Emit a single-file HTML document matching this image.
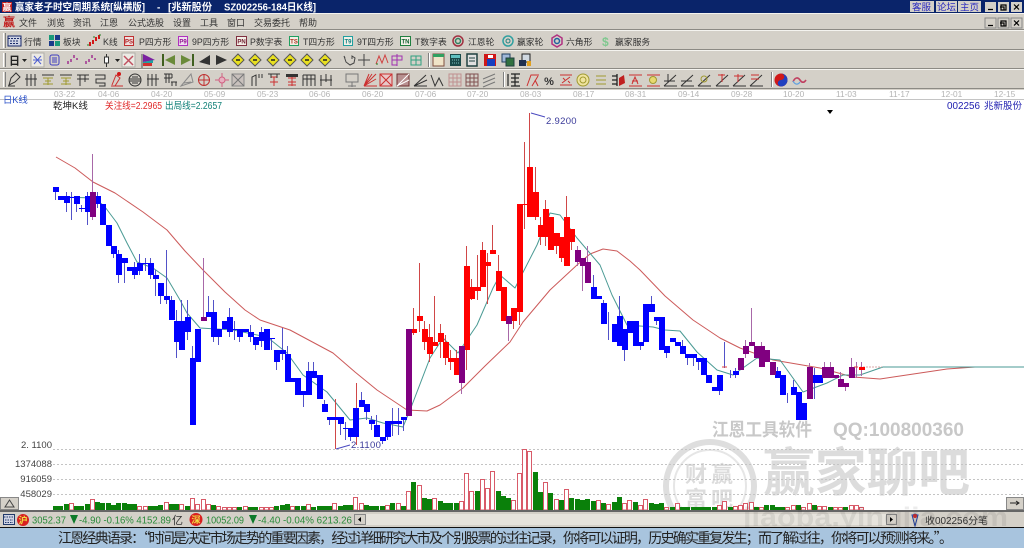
<!DOCTYPE html>
<html><head><meta charset="utf-8"><title>赢家老子时空周期系统</title>
<style>
html,body{margin:0;padding:0;width:1024px;height:548px;overflow:hidden;background:#fff}
svg{display:block}
text{font-family:"Liberation Sans","Noto Sans CJK SC",sans-serif}
</style></head><body>
<svg xmlns="http://www.w3.org/2000/svg" width="1024" height="548" viewBox="0 0 1024 548">
<!-- backgrounds -->
<rect width="1024" height="548" fill="#fff"/>
<rect y="0" width="1024" height="13" fill="#0a246a"/>
<rect y="13" width="1024" height="77" fill="#d4d0c8"/>
<g stroke-width="1" shape-rendering="crispEdges">
<path d="M0 13.500H1024M0 30.500H1024M0 50.500H1024M0 69.500H1024" stroke="#f4f3ef"/>
<path d="M0 29.500H1024M0 49.500H1024M0 68.500H1024M0 88.500H1024" stroke="#8c8a84"/>
<path d="M3.500 33V48M3.500 53V67M3.500 72V87" stroke="#fff"/>
<path d="M5.500 33V48M5.500 53V67M5.500 72V87" stroke="#808080"/>
<path d="M428.500 53V67M503.500 72V87M771.500 72V87" stroke="#808080"/>
<path d="M429.500 53V67M504.500 72V87M772.500 72V87" stroke="#fff"/>
<path d="M0 99.500H1024" stroke="#c4c4c4"/>
</g>
<!-- title -->
<rect x="2" y="2" width="10" height="10" fill="#c02020"/>
<text x="7" y="10.500" font-size="9" text-anchor="middle" fill="#fff" font-weight="bold">赢</text>
<g fill="#fff" font-weight="bold" font-size="10">
<text x="15" y="10.500" textLength="130" lengthAdjust="spacingAndGlyphs">赢家老子时空周期系统[纵横版]</text>
<text x="157" y="10.500">-</text>
<text x="168" y="10.500" textLength="44" lengthAdjust="spacingAndGlyphs">[兆新股份</text>
<text x="224" y="10.500" textLength="92" lengthAdjust="spacingAndGlyphs">SZ002256-184日K线]</text>
</g>
<!-- title right buttons -->
<g shape-rendering="crispEdges">
<rect x="910" y="1" width="24" height="11" fill="#d4d0c8"/><rect x="936" y="1" width="21" height="11" fill="#d4d0c8"/><rect x="958" y="1" width="23" height="11" fill="#d4d0c8"/>
<rect x="985" y="2" width="11" height="10" fill="#d4d0c8"/><rect x="998" y="2" width="11" height="10" fill="#d4d0c8"/><rect x="1011" y="2" width="11" height="10" fill="#d4d0c8"/>
<rect x="985" y="18" width="11" height="10" fill="#d4d0c8" stroke="#888"/><rect x="998" y="18" width="11" height="10" fill="#d4d0c8" stroke="#888"/><rect x="1011" y="18" width="11" height="10" fill="#d4d0c8" stroke="#888"/>
</g>
<g font-size="9.500" fill="#2a2ac0">
<text x="912" y="10.500">客服</text><text x="937" y="10.500">论坛</text><text x="960" y="10.500">主页</text></g>
<path d="M988 9.500h5M1001 5h5v5h-5zM1000 7h4v3M1014 4.500l5 5M1019 4.500l-5 5M988 25.500h5M1001 21h5v5h-5zM1000 23h4v3M1014 20.500l5 5M1019 20.500l-5 5" stroke="#000" fill="none" stroke-width="1.200"/>
<!-- menu -->
<text x="3" y="26" font-size="12" fill="#c01818" font-weight="bold">赢</text>
<g font-size="9" fill="#333">
<text x="19" y="26">文件</text><text x="47" y="26">浏览</text><text x="73" y="26">资讯</text><text x="100" y="26">江恩</text><text x="128" y="26">公式选股</text><text x="173" y="26">设置</text><text x="200" y="26">工具</text><text x="227" y="26">窗口</text><text x="254" y="26">交易委托</text><text x="299" y="26">帮助</text>
</g>
<!-- toolbar 1 -->
<g font-size="8.800" fill="#333">
<text x="24" y="45">行情</text><text x="63" y="45">板块</text><text x="103" y="45">K线</text><text x="139" y="45">P四方形</text><text x="192" y="45">9P四方形</text><text x="250" y="45">P数字表</text><text x="303" y="45">T四方形</text><text x="357" y="45">9T四方形</text><text x="415" y="45">T数字表</text><text x="468" y="45">江恩轮</text><text x="517" y="45">赢家轮</text><text x="566" y="45">六角形</text><text x="615" y="45">赢家服务</text>
</g>
<rect x="8" y="36" width="13" height="10" fill="#cfd4e4" stroke="#1a2a6a"/><path d="M8 38.500h13M10 41h9M10 43.500h9" stroke="#1a2a6a" fill="none" stroke-dasharray="2 1"/>
<rect x="49" y="35" width="5" height="5" fill="#1a9a7a"/><rect x="55" y="35" width="5" height="5" fill="#1a3a8a"/><rect x="49" y="41" width="5" height="5" fill="#1a3a8a"/><rect x="55" y="41" width="5" height="5" fill="#1a9a7a"/>
<path d="M90 42v4M93 40v4M96 37v4M99 35v4" stroke="#d01818" stroke-width="2"/><path d="M88 46v-2M94 38v-2M100 36v-2" stroke="#208020" stroke-width="1"/>
<g fill="#f4f0e8" stroke-width="1" shape-rendering="crispEdges">
<rect x="124.500" y="36.500" width="9" height="9" stroke="#c03030" fill="#f0e0e0"/><rect x="178.500" y="36.500" width="9" height="9" stroke="#b030c0" fill="#f0e0f0"/><rect x="236.500" y="36.500" width="10" height="9" stroke="#803040"/><rect x="289.500" y="36.500" width="9" height="9" stroke="#20a060"/><rect x="343.500" y="36.500" width="9" height="9" stroke="#20a0a0"/><rect x="400.500" y="36.500" width="10" height="9" stroke="#208040"/>
</g>
<g font-size="6" font-weight="bold" text-anchor="middle">
<text x="129" y="43.500" fill="#b02020">PS</text><text x="183" y="43.500" fill="#901090">P9</text><text x="241.500" y="43.500" fill="#702030">PN</text><text x="294" y="43.500" fill="#b03020">TS</text><text x="348" y="43.500" fill="#108080">T9</text><text x="405.500" y="43.500" fill="#106030">TN</text>
</g>
<g fill="none">
<circle cx="458" cy="41" r="5" stroke="#a03040" stroke-width="1.500"/><circle cx="458" cy="41" r="2.500" stroke="#308060" stroke-width="1.500"/>
<circle cx="508" cy="41" r="5" stroke="#30a0a0" stroke-width="1.500"/><circle cx="508" cy="41" r="2" stroke="#208080"/>
<path d="M557 35l5 3v6l-5 3-5-3v-6z" stroke="#b03080" stroke-width="1.500"/><circle cx="557" cy="41" r="2.500" stroke="#2060a0" stroke-width="1.500"/>
</g>
<text x="602" y="46" font-size="12" font-weight="bold" fill="#80c890">$</text>
<!-- toolbar 2 -->
<text x="9" y="64.500" font-size="11" font-weight="bold" fill="#222">日</text>
<path d="M22 59h5l-2.500 3zM115 59h5l-2.500 3z" fill="#222"/>
<rect x="31" y="53" width="13" height="14" fill="#eceae4" stroke="#b0aea8"/>
<rect x="122" y="53" width="13" height="14" fill="#eceae4" stroke="#b0aea8"/>
<path d="M34 56l7 8M41 56l-7 8M33 60h9" stroke="#5060d0" fill="none"/>
<rect x="50" y="55" width="9" height="10" rx="2" fill="none" stroke="#4040c0"/><path d="M52 58h5M52 60h5M52 62h5" stroke="#4040c0"/>
<path d="M68 64v-3M71 62v-3M74 58v-3M77 60v-2M86 64v-3M89 62v-3M92 58v-3M95 60v-2" stroke="#a03090" stroke-width="1.500"/>
<path d="M106.500 54v13" stroke="#333"/><rect x="104.500" y="57" width="4" height="6" fill="#fff" stroke="#333"/>
<path d="M124 56l9 9M133 56l-9 9" stroke="#c05060" stroke-width="1.500"/>
<path d="M142 54v14" stroke="#555"/><path d="M143 54l12 6-12 2z" fill="#7a20a0"/><path d="M143 62l10-2v3h-10z" fill="#20a0a0"/><path d="M143 63h9v3h-9z" fill="#d03030"/>
<path d="M163 54v12" stroke="#406020" stroke-width="2"/><path d="M175 55v10l-10-5z" fill="#6a8a3a"/>
<path d="M193 54v12" stroke="#406020" stroke-width="2"/><path d="M181 55v10l10-5z" fill="#6a8a3a"/>
<path d="M210 55v10l-11-3z" fill="#333"/><path d="M216 55v10l11-5z" fill="#333"/>
<g fill="#e8e020" stroke="#555"><path d="M238 54l6 6-6 6-6-6zM255 54l6 6-6 6-6-6zM273 54l6 6-6 6-6-6zM290 54l6 6-6 6-6-6zM307 54l6 6-6 6-6-6zM325 54l6 6-6 6-6-6z"/></g>
<path d="M236 60h4M253 60h4M271 60h4M288 60h4M305 60h4M323 60h4" stroke="#222" stroke-width="1.500"/>
<path d="M344 56l2 6 4 3 4-2 1-5-3-2v3M345 58l-1-2" stroke="#444" fill="none"/>
<path d="M364 54v12M358 60h12" stroke="#444"/>
<path d="M376 64l3-8 3 7 3-8 3 8" stroke="#d04040" fill="none"/><path d="M376 64h2" stroke="#208020"/>
<path d="M392 56h10v4h-10zM397 54v12M392 60v5h5" stroke="#a030b0" fill="none"/>
<path d="M411 56h10v9h-10zM416 56v9M411 60h10" stroke="#30a080" fill="none"/>
<rect x="433" y="54" width="11" height="12" fill="#f0e4c8" stroke="#805040"/><rect x="433" y="54" width="11" height="3" fill="#30a060"/>
<rect x="450" y="54" width="11" height="12" fill="#1a4a4a"/><rect x="451" y="55" width="9" height="3" fill="#60c0c0"/><path d="M452 60h7M452 63h7" stroke="#80c0c0" stroke-dasharray="1 1"/>
<rect x="467" y="54" width="10" height="12" fill="#e0e0e0" stroke="#204040" stroke-width="1.500"/><path d="M469 58h6M469 61h6" stroke="#204040"/>
<rect x="484" y="54" width="12" height="12" fill="#d01818"/><rect x="487" y="59" width="8" height="7" fill="#1840c0"/><rect x="488" y="55" width="5" height="3" fill="#fff"/>
<rect x="502" y="54" width="8" height="8" fill="#a0b8d8" stroke="#204060"/><rect x="506" y="58" width="8" height="8" fill="#307040" stroke="#204040"/>
<rect x="522" y="54" width="8" height="8" fill="#d0d8e0" stroke="#202020"/><rect x="519" y="60" width="7" height="6" fill="#203050"/><rect x="527" y="61" width="4" height="5" fill="#e0a020"/>
<!-- toolbar 3 -->
<g fill="none" stroke="#333">
<path d="M9 85l2-7 5-5 4 4-5 5zM8 86h7"/>
<g transform="translate(31 80)"><path d="M-4-6V6M0-6V6M4-6V6M-6-1H6"/></g>
<g transform="translate(83 80)"><path d="M-6-5H6M-3-5V6M2-5V2M-6-1H6"/></g>
<g transform="translate(100 80)"><path d="M-5-5H5V-1H-4V3H5V6H-1"/></g>
<g transform="translate(135 80)"><circle r="6"/><path d="M-6-1H6M-6 1H6M-3-3H3M-3 3H3"/></g>
<g transform="translate(153 80)"><path d="M-5-6V6M-1-6V6M3-6V6M-6-1H6"/></g>
<g transform="translate(170 80)"><path d="M-6-6H2M-4-6V3M-1-6V3M2-6V-2M1 2H7M2 2V6M6 2V6M-6-2H2"/></g>
<g transform="translate(257 80)"><path d="M-5 6V-3L-1-5V6M2-6V-2M5-6V-2"/></g>
<g transform="translate(309 80)"><path d="M-6-5H6V6M-6-5V6M-6-1H6M-2-5V6M2-5V6"/></g>
<g transform="translate(326 80)"><path d="M-5-5V6M5-5V6M0-6V2M-6 0H6"/></g>
<g transform="translate(420 80)"><path d="M-6 6L6-5M-6 6L7 0M-6 6H7"/></g>
<g transform="translate(437 80)"><path d="M-6-5L-2 6L2-2L6 6"/></g>
<g transform="translate(514 80)"><path d="M-6-6V6M-3-6H6M-3-2H5M-3 2H5M-3 6H6M1-6V6" stroke="#222" stroke-width="1.200"/></g>
<g transform="translate(618 80)"><path d="M-1-6V6M-6-4H-1M-6 0H-1M-6 4H-1" stroke="#222" stroke-width="1.300"/></g>
<g transform="translate(670 80)"><path d="M-6 6L6-5M-6 6H7M-6 1H5M-2-6V2"/></g>
<g transform="translate(687 80)"><path d="M-6 6L6-5M-6 6H7M-6 1H5"/></g>
<g transform="translate(704 80)"><path d="M-6 6L6-5M-6 6H7"/></g>
<g transform="translate(722 80)"><path d="M-6 6L6-5M-6 6H7"/></g>
<g transform="translate(739 80)"><path d="M-6 6L6-5M-6 6H7"/></g>
<g transform="translate(756 80)"><path d="M-6 6L6-5M-6 6H7"/></g>
</g>
<g fill="none" stroke="#a09a30">
<g transform="translate(48 80)"><path d="M-5-2H5M-3 1H3M-5 4H5M0-2V5"/></g>
<g transform="translate(66 80)"><path d="M-5-2H5M-3 1H3M-5 4H5M0-2V5"/></g>
<g transform="translate(601 80)"><path d="M-5-4H5M-5 0H5M-5 4H5"/></g>
<g transform="translate(704 79)"><circle r="3"/></g>
</g>
<g stroke="#333" fill="none"><path d="M42-99"/><path d="M42 75h12M60 75h12"/></g>
<g fill="none" stroke="#cc3030">
<g transform="translate(117 80)"><path d="M-5 5L-1-5L3-2L-2 6M-6 6H6" /></g>
<g transform="translate(274 80)"><path d="M-3-3H3M0-3V6M-4 2H4"/></g>
<g transform="translate(292 80)"><path d="M-4-2H4M-4 2H4M-4 5H4M0-3V6"/></g>
<g transform="translate(370 80)"><path d="M-6 6L6-6M-6 6L6-1M-6 6L-1-6M-6 6L2-6M-6 6H7"/></g>
<g transform="translate(386 80)"><rect x="-6" y="-6" width="12" height="12" fill="#e8c8c8"/><path d="M-6-6L6 6M6-6L-6 6"/></g>
<g transform="translate(532 80)"><path d="M-5 6L-1-5H7M0 6L6-4M6 6L3 0"/></g>
<g transform="translate(566 80)"><path d="M-6-5H6M-6 5H6M-4 3L4-3M-3-2L-1 0M2 1L4 3"/></g>
<g transform="translate(635 80)"><path d="M-6-5H7M-6 6H7M-3 4L0-3L3 4M-3 1H3"/></g>
<g transform="translate(653 80)"><path d="M-6-5H7M-6 6H7"/></g>
<g transform="translate(722 80)"><path d="M-4-5H3M0-6V2"/></g>
<g transform="translate(739 80)"><path d="M-5-4H4M-1-6V2"/></g>
<g transform="translate(756 80)"><path d="M-5-5H3M-5-1H3"/></g>
</g>
<g transform="translate(292 80)"><path d="M-6-6H6V-3H-6z" fill="#333"/></g>
<g transform="translate(274 80)"><path d="M-6-6H6M-3-6V-2M3-6V-2" stroke="#333" fill="none"/></g>
<g transform="translate(117 79)"><circle cx="2" cy="-5" r="2" fill="#d01818"/></g>
<g transform="translate(653 80)"><circle cy="0" r="3.500" fill="#e8d870" stroke="#a09a30"/></g>
<g transform="translate(583 80)"><circle r="6" fill="#f0e4a0" stroke="#a09a30"/><circle r="3" fill="none" stroke="#a09a30"/></g>
<g transform="translate(618 80)"><path d="M1 6V-2L6-5L7 3z" fill="#c02020"/></g>
<text x="549" y="85" font-size="11" font-weight="bold" fill="#333" text-anchor="middle">%</text>
<g transform="translate(187 80)" fill="none" stroke="#8a8a8a"><path d="M-6 6L4-6L6 2zM-3 3L4 2"/></g>
<g transform="translate(204 80)" fill="none" stroke="#c03030"><circle r="5.500"/><path d="M-6 0H6M0-6V6"/></g>
<g transform="translate(222 80)" fill="none" stroke="#d06080"><path d="M-7 0H7M0-7V7"/><circle r="3" fill="#e8b0c0"/></g>
<g transform="translate(238 80)"><rect x="-6" y="-6" width="12" height="12" fill="#c8c0bc" stroke="#888"/><path d="M-6-6L6 6M6-6L-6 6" stroke="#777"/></g>
<g transform="translate(352 80)" fill="none" stroke="#777"><path d="M-6-6H6V2H-6zM0 2V7M-4 6H4"/></g>
<g transform="translate(403 80)"><rect x="-6" y="-6" width="12" height="12" fill="#b89090" stroke="#703030"/><path d="M-6 6L6-6M-6 6L6 0" stroke="#fff" fill="none"/></g>
<g transform="translate(455 80)" fill="none" stroke="#c09090"><path d="M-6-6H6V6H-6zM-2-6V6M2-6V6M-6-2H6M-6 2H6"/></g>
<g transform="translate(472 80)" fill="none" stroke="#805050"><path d="M-6-6H6V6H-6zM-2-6V6M2-6V6M-6-2H6M-6 2H6"/></g>
<g transform="translate(489 80)" fill="none" stroke="#777"><path d="M-6-1L6-6M-6 3L6-2M-6 7L6 2"/></g>
<circle cx="781" cy="80" r="6.500" fill="#d01818"/><path d="M781 73.500a3.200 3.200 0 0 1 0 6.500a3.200 3.200 0 0 0 0 6.500a6.500 6.500 0 0 0 0-13z" fill="#2040c0"/>
<path d="M793 82c2-5 5-5 7-2s4 3 6 0" fill="none" stroke="#c04060" stroke-width="1.600"/><path d="M793 81c2 4 5 4 7 1" fill="none" stroke="#60a0e0" stroke-width="1.200"/>
<!-- date axis -->
<g font-size="8.300" fill="#b4b4b4">
<text x="54" y="97">03-22</text><text x="98" y="97">04-06</text><text x="151" y="97">04-20</text><text x="204" y="97">05-09</text><text x="257" y="97">05-23</text><text x="309" y="97">06-06</text><text x="362" y="97">06-20</text><text x="415" y="97">07-06</text><text x="467" y="97">07-20</text><text x="520" y="97">08-03</text><text x="573" y="97">08-17</text><text x="625" y="97">08-31</text><text x="678" y="97">09-14</text><text x="731" y="97">09-28</text><text x="783" y="97">10-20</text><text x="836" y="97">11-03</text><text x="889" y="97">11-17</text><text x="941" y="97">12-01</text><text x="994" y="97">12-15</text>
</g>
<text x="3" y="103" font-size="9.300" fill="#2a50c8">日K线</text>
<text x="53" y="109" font-size="9.500" fill="#222">乾坤K线</text>
<text x="105" y="109" font-size="9.800" fill="#e02828" textLength="57" lengthAdjust="spacingAndGlyphs">关注线=2.2965</text>
<text x="165" y="109" font-size="9.800" fill="#108078" textLength="57" lengthAdjust="spacingAndGlyphs">出局线=2.2657</text>
<text x="947" y="109" font-size="10" fill="#2020b0" textLength="33" lengthAdjust="spacingAndGlyphs">002256</text>
<text x="984" y="109" font-size="9.500" fill="#2020b0">兆新股份</text>
<path d="M827 110h6l-3 4z" fill="#000"/>
<!-- watermark -->
<g fill="#d6d6d6">
<text x="712" y="436" font-size="18" font-weight="bold" fill="#c8c8c8" textLength="100" lengthAdjust="spacingAndGlyphs">江恩工具软件</text>
<text x="833" y="436" font-size="19" font-weight="bold" fill="#c8c8c8" textLength="131" lengthAdjust="spacingAndGlyphs">QQ:100800360</text>
<text x="763" y="491" font-size="52" font-weight="bold" fill="#dcdcdc" textLength="207" lengthAdjust="spacingAndGlyphs">赢家聊吧</text>
</g>
<circle cx="710" cy="486" r="44" fill="none" stroke="#dedede" stroke-width="6"/>
<circle cx="710" cy="486" r="36" fill="none" stroke="#e6e6e6" stroke-width="2"/>
<g font-size="22" font-weight="bold" fill="#dcdcdc"><text x="685" y="482">财</text><text x="711" y="482">赢</text><text x="685" y="507">富</text><text x="711" y="507">吧</text></g>
<!-- grid -->
<path d="M53 449.500H1023M53 464.500H1023M53 479.500H1023M53 494.500H1023" stroke="#c4c4c4" stroke-dasharray="2 2" fill="none" shape-rendering="crispEdges"/>
<g font-size="9.500" fill="#444" text-anchor="end">
<text x="52" y="448">2. 1100</text><text x="52" y="467">1374088</text><text x="52" y="482">916059</text><text x="52" y="497">458029</text>
</g>
<!-- MA lines -->
<path fill="none" stroke="#cc5a5a" stroke-width="1" stroke-linejoin="round" d="M56 157L75 168L93 182L115 193L143 212L167 230L185 251L203 270L225 292L245 310L260 320L290 330L333 353L355 372L377 390L407 410L427 411L440 405L463 388L485 366L510 342L523 322L550 290L577 265L590 254L603 249L617 251L630 261L640 270L665 296L693 320L720 338L740 348L773 360L820 368L853 377L880 379L900 376L947 369L975 367"/>
<path fill="none" stroke="#4a9a94" stroke-width="1" stroke-linejoin="round" d="M60 197L95 198L105 207L117 223L127 243L137 262L153 268L167 278L180 300L187 313L200 328L233 330L267 337L287 353L303 375L327 392L350 420L367 418L383 423L403 427L412 405L430 358L443 338L458 353L477 325L493 288L500 275L515 288L537 245L550 213L560 215L577 238L600 265L612 295L627 325L653 327L665 330L680 331L697 352L717 370L733 375L757 358L780 360L803 392L827 383L843 375L860 375L883 367L1024 367"/>
<path d="M860 367H882" stroke="#d8a8a8" stroke-dasharray="2 1" fill="none"/>
<!-- wicks -->
<g fill="none" stroke-width="1" shape-rendering="crispEdges">
<path stroke="#5252c8" d="M55.500 187V200M66.500 192V212M71.500 192V220M76.500 196V212M81.500 205V212M87.500 192V225M97.500 192V208M113.500 246V258M118.500 250V283M124.500 258V283M134.500 262V279M139.500 254V275M145.500 258V271M150.500 258V279M155.500 270V296M160.500 283V304M166.500 250V304M171.500 296V320M176.500 310V358M181.500 300V350M187.500 300V340M192.500 346V360M208.500 296V317M213.500 300V342M218.500 329V345M229.500 308V337M234.500 321V340M239.500 329V342M250.500 325V342M255.500 337V350M261.500 327V347M271.500 338V350M276.500 350V370M282.500 328V360M287.500 346V354M303.500 391V407M308.500 362V371M313.500 362V371M324.500 400V412M329.500 417V425M340.500 417V435M345.500 422V440M350.500 428V441M361.500 392V400M366.500 404V420M371.500 416V430M376.500 415V425M382.500 437V444M387.500 421V440M392.500 408V436M398.500 408V435M403.500 417V431M593.500 275V287M603.500 300V304M608.500 312V340M619.500 296V316M624.500 340V361M640.500 342V350M651.500 296V304M656.500 317V325M666.500 346V358M682.500 340V346M687.500 354V365M693.500 354V366M698.500 358V370M703.500 358V372M719.500 375V395M724.500 342V368M730.500 370V378M735.500 368V378M777.500 367V371M787.500 393V403M793.500 380V387M814.500 368V399"/>
<path stroke="#d04848" d="M335.500 399V449M356.500 383V445M413.500 308V335M419.500 263V332M424.500 321V350M429.500 324V362M434.500 296V342M440.500 324V358M445.500 335V365M450.500 350V370M456.500 350V375M466.500 246V370M471.500 279V300M477.500 255V300M482.500 242V252M487.500 253V304M492.500 225V252M498.500 255V272M513.500 308V329M519.500 300V325M524.500 142V229M529.500 113V170M535.500 167V220M540.500 217V245M545.500 200V246M556.500 233V254M561.500 237V262M566.500 196V218M571.500 229V250"/>
<path stroke="#a868a8" d="M92.500 154V220M203.500 258V317M461.500 346V394M508.500 316V341M577.500 246V266M582.500 258V291M587.500 246V265M745.500 340V358M751.500 308V342M761.500 342V348M809.500 363V367M824.500 362V367M830.500 362V367M840.500 372V380M845.500 387V391M851.500 358V367M856.500 362V378M861.500 362V376"/>
</g>
<!-- candle bodies -->
<path fill="#0000ff" shape-rendering="crispEdges" d="M53 187h6v5h-6zM58 196h6v4h-6zM64 196h6v7h-6zM69 197h6v1h-6zM74 196h6v8h-6zM79 208h6v1h-6zM85 196h6v16h-6zM95 196h6v8h-6zM100 204h6v21h-6zM106 225h6v21h-6zM111 246h6v8h-6zM116 254h6v21h-6zM122 258h6v5h-6zM127 267h6v4h-6zM132 267h6v8h-6zM137 263h6v8h-6zM143 263h6v1h-6zM148 263h6v12h-6zM153 275h6v4h-6zM158 283h6v13h-6zM164 296h6v4h-6zM169 300h6v20h-6zM174 321h6v21h-6zM179 321h6v29h-6zM185 317h6v15h-6zM190 358h6v67h-6zM195 329h6v33h-6zM206 312h6v5h-6zM211 312h6v25h-6zM216 329h6v8h-6zM222 321h6v8h-6zM227 317h6v15h-6zM232 329h6v1h-6zM237 329h6v8h-6zM243 329h6v3h-6zM248 332h6v5h-6zM253 337h6v8h-6zM259 332h6v9h-6zM264 329h6v21h-6zM269 338h6v1h-6zM274 350h6v12h-6zM280 350h6v4h-6zM285 354h6v28h-6zM290 378h6v4h-6zM295 378h6v17h-6zM301 391h6v4h-6zM306 371h6v24h-6zM311 371h6v7h-6zM317 375h6v24h-6zM322 404h6v8h-6zM327 417h6v3h-6zM332 417h6v3h-6zM338 417h6v7h-6zM343 428h6v1h-6zM348 428h6v9h-6zM353 408h6v29h-6zM359 400h6v7h-6zM364 404h6v8h-6zM369 420h6v4h-6zM374 425h6v12h-6zM380 437h6v4h-6zM385 421h6v16h-6zM390 421h6v3h-6zM396 421h6v3h-6zM401 417h6v3h-6zM591 287h6v12h-6zM596 296h6v3h-6zM601 303h6v21h-6zM612 324h6v18h-6zM617 316h6v30h-6zM622 329h6v21h-6zM627 321h6v12h-6zM633 321h6v25h-6zM638 342h6v4h-6zM643 304h6v38h-6zM649 304h6v8h-6zM654 317h6v4h-6zM659 317h6v33h-6zM664 346h6v7h-6zM670 338h6v4h-6zM675 342h6v4h-6zM680 346h6v8h-6zM685 354h6v4h-6zM691 354h6v4h-6zM696 358h6v4h-6zM701 358h6v17h-6zM706 375h6v8h-6zM712 387h6v4h-6zM717 375h6v16h-6zM733 371h6v4h-6zM775 371h6v7h-6zM780 375h6v20h-6zM791 387h6v8h-6zM796 392h6v28h-6zM801 403h6v17h-6zM812 375h6v8h-6zM817 375h6v8h-6z"/>
<path fill="#ff0000" shape-rendering="crispEdges" d="M411 329h6v4h-6zM417 316h6v5h-6zM422 329h6v13h-6zM427 337h6v17h-6zM432 342h6v4h-6zM438 333h6v9h-6zM443 342h6v16h-6zM448 358h6v4h-6zM454 358h6v17h-6zM464 266h6v84h-6zM469 287h6v12h-6zM475 287h6v4h-6zM480 250h6v37h-6zM485 262h6v4h-6zM490 250h6v4h-6zM496 271h6v20h-6zM501 287h6v34h-6zM511 308h6v13h-6zM517 204h6v108h-6zM522 204h6v1h-6zM527 167h6v50h-6zM533 192h6v25h-6zM538 225h6v12h-6zM543 209h6v28h-6zM548 217h6v33h-6zM554 233h6v13h-6zM559 237h6v21h-6zM564 217h6v49h-6zM569 229h6v13h-6zM859 367h6v3h-6z"/>
<path fill="#800080" shape-rendering="crispEdges" d="M90 192h6v25h-6zM201 317h6v4h-6zM406 329h6v87h-6zM459 346h6v37h-6zM506 316h6v8h-6zM575 250h6v12h-6zM580 258h6v8h-6zM585 262h6v21h-6zM738 358h6v12h-6zM743 346h6v8h-6zM749 342h6v4h-6zM754 346h6v12h-6zM759 346h6v21h-6zM764 350h6v12h-6zM770 362h6v13h-6zM807 367h6v32h-6zM822 367h6v11h-6zM828 367h6v11h-6zM833 375h6v3h-6zM838 379h6v8h-6zM843 383h6v4h-6zM849 367h6v11h-6z"/>
<path d="M722 367h5M854 367h4" stroke="#e04040" fill="none" shape-rendering="crispEdges"/>
<!-- high/low labels -->
<path d="M531 113L545 117M336 449L350 445" stroke="#4a4ac0" fill="none"/>
<text x="546" y="124" font-size="9.500" fill="#3a3a9a" letter-spacing=".3">2.9200</text>
<text x="351" y="448" font-size="9.500" fill="#3a3a9a" letter-spacing=".3">2.1100</text>
<!-- volume -->
<path fill="#0a800a" shape-rendering="crispEdges" d="M53 506h5V510h-5zM58 506h5V510h-5zM64 504h5V510h-5zM74 506h5V510h-5zM79 506h5V510h-5zM85 504h5V510h-5zM95 502h5V510h-5zM100 503h5V510h-5zM106 503h5V510h-5zM111 505h5V510h-5zM116 503h5V510h-5zM122 503h5V510h-5zM127 504h5V510h-5zM132 504h5V510h-5zM148 506h5V510h-5zM153 506h5V510h-5zM158 505h5V510h-5zM169 504h5V510h-5zM174 504h5V510h-5zM185 506h5V510h-5zM211 505h5V510h-5zM237 507h5V510h-5zM248 507h5V510h-5zM253 507h5V510h-5zM274 506h5V510h-5zM280 505h5V510h-5zM285 504h5V510h-5zM295 506h5V510h-5zM301 506h5V510h-5zM311 507h5V510h-5zM317 506h5V510h-5zM322 506h5V510h-5zM327 506h5V510h-5zM338 506h5V510h-5zM343 505h5V510h-5zM348 505h5V510h-5zM364 505h5V510h-5zM369 506h5V510h-5zM374 506h5V510h-5zM380 506h5V510h-5zM390 503h5V510h-5zM401 506h5V510h-5zM411 482h5V510h-5zM422 498h5V510h-5zM427 499h5V510h-5zM438 501h5V510h-5zM443 503h5V510h-5zM448 503h5V510h-5zM454 503h5V510h-5zM475 491h5V510h-5zM496 491h5V510h-5zM501 496h5V510h-5zM506 498h5V510h-5zM533 472h5V510h-5zM538 492h5V510h-5zM548 493h5V510h-5zM559 500h5V510h-5zM569 498h5V510h-5zM575 499h5V510h-5zM580 500h5V510h-5zM585 499h5V510h-5zM591 501h5V510h-5zM601 503h5V510h-5zM612 502h5V510h-5zM617 497h5V510h-5zM633 502h5V510h-5zM649 503h5V510h-5zM654 504h5V510h-5zM659 503h5V510h-5zM670 507h5V510h-5zM680 507h5V510h-5zM685 507h5V510h-5zM691 507h5V510h-5zM696 507h5V510h-5zM701 507h5V510h-5zM706 507h5V510h-5zM712 507h5V510h-5zM728 507h5V510h-5zM754 507h5V510h-5zM764 505h5V510h-5zM770 505h5V510h-5zM775 507h5V510h-5zM780 507h5V510h-5zM796 505h5V510h-5zM812 505h5V510h-5zM828 507h5V510h-5zM843 507h5V510h-5z"/>
<path fill="#fff" stroke="#d85a68" stroke-width="1" shape-rendering="crispEdges" d="M69.500 503.500h4V510h-4zM90.500 499.500h4V510h-4zM143.500 506.500h4V510h-4zM137.500 506.500h4V510h-4zM164.500 502.500h4V510h-4zM179.500 504.500h4V510h-4zM190.500 498.500h4V510h-4zM195.500 504.500h4V510h-4zM201.500 499.500h4V510h-4zM206.500 504.500h4V510h-4zM216.500 506.500h4V510h-4zM222.500 507.500h4V510h-4zM227.500 507.500h4V510h-4zM232.500 507.500h4V510h-4zM243.500 506.500h4V510h-4zM259.500 507.500h4V510h-4zM264.500 507.500h4V510h-4zM269.500 507.500h4V510h-4zM290.500 506.500h4V510h-4zM306.500 504.500h4V510h-4zM332.500 503.500h4V510h-4zM353.500 497.500h4V510h-4zM359.500 503.500h4V510h-4zM385.500 505.500h4V510h-4zM396.500 503.500h4V510h-4zM406.500 491.500h4V510h-4zM417.500 485.500h4V510h-4zM432.500 498.500h4V510h-4zM459.500 501.500h4V510h-4zM464.500 473.500h4V510h-4zM469.500 491.500h4V510h-4zM480.500 479.500h4V510h-4zM485.500 488.500h4V510h-4zM490.500 471.500h4V510h-4zM511.500 500.500h4V510h-4zM517.500 473.500h4V510h-4zM522.500 449.500h4V510h-4zM527.500 451.500h4V510h-4zM543.500 482.500h4V510h-4zM554.500 499.500h4V510h-4zM564.500 489.500h4V510h-4zM596.500 500.500h4V510h-4zM606.500 504.500h4V510h-4zM622.500 503.500h4V510h-4zM627.500 500.500h4V510h-4zM638.500 505.500h4V510h-4zM643.500 499.500h4V510h-4zM664.500 507.500h4V510h-4zM675.500 503.500h4V510h-4zM717.500 505.500h4V510h-4zM722.500 501.500h4V510h-4zM733.500 506.500h4V510h-4zM738.500 505.500h4V510h-4zM743.500 503.500h4V510h-4zM749.500 502.500h4V510h-4zM759.500 507.500h4V510h-4zM785.500 507.500h4V510h-4zM791.500 505.500h4V510h-4zM801.500 507.500h4V510h-4zM807.500 503.500h4V510h-4zM817.500 506.500h4V510h-4zM822.500 506.500h4V510h-4zM833.500 507.500h4V510h-4zM838.500 507.500h4V510h-4zM849.500 505.500h4V510h-4zM854.500 505.500h4V510h-4zM859.500 507.500h4V510h-4z"/>
<!-- corner buttons -->
<rect x="0.500" y="497.500" width="18" height="12" fill="#d4d0c8" stroke="#888"/>
<path d="M5 507h9l-4.500-7z" fill="none" stroke="#444"/>
<rect x="1006.500" y="497.500" width="17" height="12" fill="#d4d0c8" stroke="#888"/>
<path d="M1010 503h9M1016 501l3 2-3 2" fill="none" stroke="#222"/>
<!-- status bar -->
<rect y="510" width="1024" height="17" fill="#d4d0c8"/>
<rect y="510" width="1024" height="2" fill="#666"/>
<rect y="527" width="1024" height="1" fill="#111"/>
<rect x="354" y="514" width="543" height="11" fill="#e6e3dc"/>
<rect x="354.500" y="514.500" width="11" height="10" fill="#d4d0c8" stroke="#888"/><path d="M361 517v5l-3-2.500z" fill="#000"/>
<rect x="886.500" y="514.500" width="10" height="10" fill="#d4d0c8" stroke="#888"/><path d="M890 517v5l3-2.500z" fill="#000"/>
<rect x="3.500" y="514.500" width="11" height="10" fill="#d0d4e4" stroke="#223a6a"/><path d="M4 517h10M5 520h8M5 522.500h8" stroke="#223a6a" stroke-dasharray="1.500 1" fill="none"/>
<circle cx="23" cy="520" r="6" fill="#d82020"/><text x="23" y="523.500" font-size="9" fill="#f0e040" text-anchor="middle" font-weight="bold">沪</text>
<circle cx="196" cy="519.500" r="6.500" fill="#d82020"/><text x="196" y="523" font-size="9" fill="#f0e040" text-anchor="middle" font-weight="bold">深</text>
<g font-size="10" fill="#2a8a3a">
<text x="32" y="523.500" textLength="34" lengthAdjust="spacingAndGlyphs">3052.37</text>
<text x="79" y="523.500" textLength="92" lengthAdjust="spacingAndGlyphs">-4.90 -0.16% 4152.89</text>
<text x="206" y="523.500" textLength="38" lengthAdjust="spacingAndGlyphs">10052.09</text>
<text x="258" y="523.500" textLength="94" lengthAdjust="spacingAndGlyphs">-4.40 -0.04% 6213.26</text>
</g>
<text x="172" y="524" font-size="11" fill="#333">亿</text>
<path d="M70 515h8l-4 9zM249 515h8l-4 9z" fill="#0e7a2a"/>
<path d="M915 526l-3-11h1l2-1 2 1h1z" fill="none" stroke="#2040a0"/><circle cx="915" cy="516" r="2" fill="#d03030"/>
<text x="925" y="524" font-size="9.800" fill="#333" textLength="63" lengthAdjust="spacingAndGlyphs">收002256分笔</text>
<text x="743" y="526" font-size="27" font-weight="bold" fill="#000" opacity=".07" textLength="265" lengthAdjust="spacingAndGlyphs">jiaoba.yingjia.com</text>
<!-- quote bar -->
<rect y="528" width="1024" height="20" fill="#a8c4de"/>
<text x="58" y="543" font-size="14" fill="#222" style='font-family:"Noto Sans CJK SC",sans-serif' textLength="895" lengthAdjust="spacing">江恩经典语录：“时间是决定市场走势的重要因素，经过详细研究大市及个别股票的过往记录，你将可以证明，历史确实重复发生；而了解过往，你将可以预测将来。”。</text>
</svg>
</body></html>
